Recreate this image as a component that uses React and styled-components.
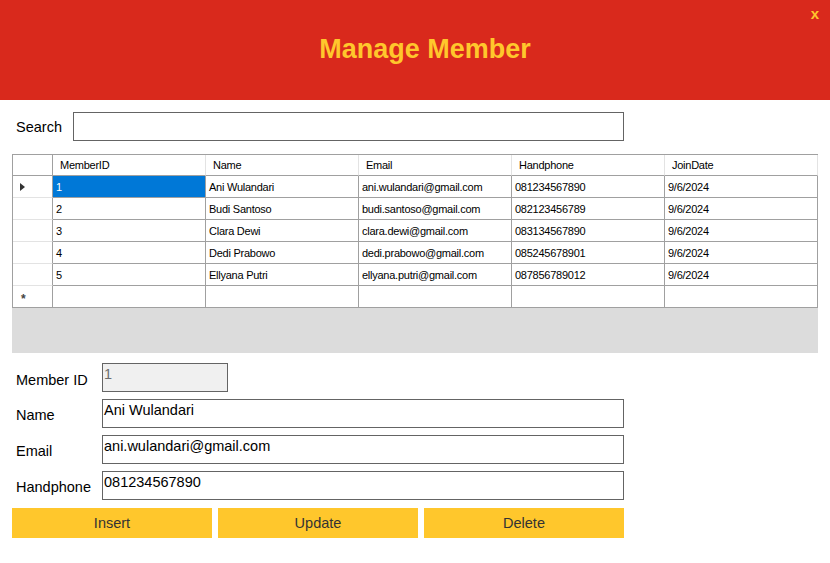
import React from 'react';
import styled, { createGlobalStyle } from 'styled-components';

const GlobalStyle = createGlobalStyle`
    body {
        margin: 0;
        background: #fff;
        font-family: "Liberation Sans", Arial, sans-serif;
    }
`;

const Window = styled.div`
    width: 830px;
    height: 563px;
    background: #fff;
    overflow: hidden;
`;

const Header = styled.div`
    position: relative;
    height: 100px;
    background: #d9291c;
    display: flex;
    align-items: center;
    justify-content: center;
    padding: 0 0 2px 20px;
    box-sizing: border-box;
`;

const Title = styled.h1`
    margin: 0;
    color: #ffc72c;
    font-size: 27px;
    font-weight: bold;
`;

const CloseBtn = styled.span`
    position: absolute;
    top: 5px;
    right: 11px;
    color: #ffc72c;
    font-size: 15px;
    font-weight: bold;
    cursor: pointer;
`;

const Main = styled.div`
    padding: 12px 12px 0 12px;
`;

const SearchRow = styled.div`
    display: flex;
    align-items: center;
    height: 29px;
`;

const Label = styled.label`
    font-size: 14.5px;
    color: #000;
    width: ${p => p.$width || '61px'};
    padding-left: 4px;
    padding-top: ${p => p.$drop || '0'};
    box-sizing: border-box;
`;

const TextBox = styled.div`
    width: ${p => p.$width};
    height: 29px;
    box-sizing: border-box;
    border: 1px solid #646464;
    background: ${p => (p.$disabled ? '#f0f0f0' : '#fff')};
    color: ${p => (p.$disabled ? '#6d6d6d' : '#000')};
    font-size: 14.5px;
    padding: 2px 1px;
    line-height: 17px;
`;

const GridBox = styled.div`
    margin-top: 13px;
    width: 806px;
    height: 199px;
    background: #dcdcdc;
`;

const Grid = styled.div`
    display: grid;
    grid-template-columns: 40px repeat(5, 153px);
    grid-template-rows: 21px repeat(6, 22px);
    border-top: 1px solid #a0a0a0;
    border-left: 1px solid #a0a0a0;
    background: #fff;
    font-size: 11px;
    letter-spacing: -0.25px;
    color: #000;
`;

const Cell = styled.div`
    box-sizing: border-box;
    display: flex;
    align-items: center;
    padding-left: ${p => (p.$head ? '7px' : '3px')};
    white-space: nowrap;
    overflow: hidden;
    border-right: 1px solid ${p => (p.$head && !p.$corner ? '#e3e3e3' : '#a0a0a0')};
    border-bottom: 1px solid ${p => (p.$rowHead && !p.$last ? '#e3e3e3' : '#a0a0a0')};
    background: ${p => (p.$selected ? '#0078d7' : '#fff')};
    color: ${p => (p.$selected ? '#fff' : '#000')};
`;

const RowMark = styled.div`
    width: 0;
    height: 0;
    margin-left: 4px;
    border-top: 4px solid transparent;
    border-bottom: 4px solid transparent;
    border-left: 5px solid #333;
`;

const NewMark = styled.span`
    margin-left: 5px;
    margin-top: 4px;
    color: #444;
    font-size: 12px;
    font-weight: bold;
`;

const Form = styled.div`
    margin-top: 10px;
    display: flex;
    flex-direction: column;
    gap: 7px;
`;

const FormRow = styled.div`
    display: flex;
    align-items: center;
`;

const ButtonRow = styled.div`
    display: flex;
    gap: 6px;
    margin-top: 8px;
`;

const Button = styled.button`
    width: 200px;
    height: 30px;
    border: none;
    background: #ffc72c;
    color: #333;
    font-family: "Liberation Sans", Arial, sans-serif;
    font-size: 14.5px;
    padding: 0;
    cursor: pointer;
`;

const columns = ['MemberID', 'Name', 'Email', 'Handphone', 'JoinDate'];

const members = [
    ['1', 'Ani Wulandari', 'ani.wulandari@gmail.com', '081234567890', '9/6/2024'],
    ['2', 'Budi Santoso', 'budi.santoso@gmail.com', '082123456789', '9/6/2024'],
    ['3', 'Clara Dewi', 'clara.dewi@gmail.com', '083134567890', '9/6/2024'],
    ['4', 'Dedi Prabowo', 'dedi.prabowo@gmail.com', '085245678901', '9/6/2024'],
    ['5', 'Ellyana Putri', 'ellyana.putri@gmail.com', '087856789012', '9/6/2024'],
];

const fields = [
    { label: 'Name', value: 'Ani Wulandari' },
    { label: 'Email', value: 'ani.wulandari@gmail.com' },
    { label: 'Handphone', value: '081234567890' },
];

export default function App() {
    return (
        <Window>
            <GlobalStyle />
            <Header>
                <Title>Manage Member</Title>
                <CloseBtn>x</CloseBtn>
            </Header>
            <Main>
                <SearchRow>
                    <Label>Search</Label>
                    <TextBox $width="551px" />
                </SearchRow>

                <GridBox>
                    <Grid>
                        <Cell $head $corner />
                        {columns.map(c => <Cell key={c} $head>{c}</Cell>)}

                        {members.map((row, i) => (
                            <React.Fragment key={row[0]}>
                                <Cell $rowHead>{i === 0 && <RowMark />}</Cell>
                                {row.map((v, j) => (
                                    <Cell key={j} $selected={i === 0 && j === 0}>{v}</Cell>
                                ))}
                            </React.Fragment>
                        ))}

                        <Cell $rowHead $last><NewMark>*</NewMark></Cell>
                        {columns.map(c => <Cell key={'new' + c} />)}
                    </Grid>
                </GridBox>

                <Form>
                    <FormRow>
                        <Label $width="90px" $drop="4px">Member ID</Label>
                        <TextBox $width="126px" $disabled>1</TextBox>
                    </FormRow>
                    {fields.map(f => (
                        <FormRow key={f.label}>
                            <Label $width="90px" $drop="2px">{f.label}</Label>
                            <TextBox $width="522px">{f.value}</TextBox>
                        </FormRow>
                    ))}
                </Form>

                <ButtonRow>
                    <Button>Insert</Button>
                    <Button>Update</Button>
                    <Button>Delete</Button>
                </ButtonRow>
            </Main>
        </Window>
    );
}
